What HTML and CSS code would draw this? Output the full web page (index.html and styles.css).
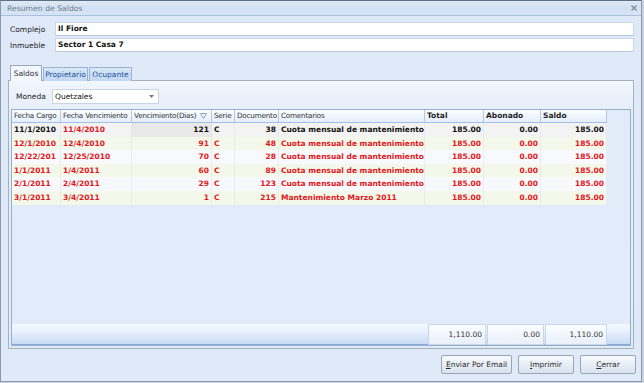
FILE: index.html
```html
<!DOCTYPE html>
<html>
<head>
  <title>Resumen de Saldos</title>
  <link rel="stylesheet" href="styles.css">
</head>
<body>
<div class="window">
  <div class="titlebar">
    <span class="title">Resumen de Saldos</span>
    <svg class="close" width="6" height="6" viewBox="0 0 6 6"><path d="M0.5 0.5 L5.5 5.5 M5.5 0.5 L0.5 5.5" stroke="#7b8796" stroke-width="1.1"/></svg>
  </div>
  <div class="content">
    <div class="field">
      <span class="label">Complejo</span>
      <div class="input">Il Fiore</div>
    </div>
    <div class="field">
      <span class="label">Inmueble</span>
      <div class="input">Sector 1 Casa 7</div>
    </div>

    <div class="tabs">
      <span class="tab active">Saldos</span>
      <span class="tab">Propietario</span>
      <span class="tab">Ocupante</span>
    </div>
    <div class="page">
      <div class="moneda">
        <span class="label">Moneda</span>
        <div class="combo">
          <span>Quetzales</span>
          <svg width="5" height="3" viewBox="0 0 5 3"><path d="M0 0 H5 L2.5 3 Z" fill="#777"/></svg>
        </div>
      </div>

      <div class="grid">
        <div class="row head">
          <div class="cell">Fecha Cargo</div>
          <div class="cell">Fecha Vencimiento</div>
          <div class="cell filter">Vencimiento(Dias)
            <svg width="7" height="6" viewBox="0 0 7 6"><path d="M0.5 0.5 H6.5 L3.5 5.5 Z" fill="none" stroke="#8a9bb3" stroke-width="0.9"/></svg>
          </div>
          <div class="cell">Serie</div>
          <div class="cell">Documento</div>
          <div class="cell">Comentarios</div>
          <div class="cell b">Total</div>
          <div class="cell b">Abonado</div>
          <div class="cell b">Saldo</div>
        </div>
        <div class="rows">
          <div class="row data first">
            <div class="cell">11/1/2010</div>
            <div class="cell red">11/4/2010</div>
            <div class="cell num focus">121</div>
            <div class="cell">C</div>
            <div class="cell num">38</div>
            <div class="cell">Cuota mensual de mantenimiento</div>
            <div class="cell num">185.00</div>
            <div class="cell num">0.00</div>
            <div class="cell num">185.00</div>
          </div>
          <div class="row data red alt">
            <div class="cell">12/1/2010</div>
            <div class="cell">12/4/2010</div>
            <div class="cell num">91</div>
            <div class="cell">C</div>
            <div class="cell num">48</div>
            <div class="cell">Cuota mensual de mantenimiento</div>
            <div class="cell num">185.00</div>
            <div class="cell num">0.00</div>
            <div class="cell num">185.00</div>
          </div>
          <div class="row data red">
            <div class="cell">12/22/201</div>
            <div class="cell">12/25/2010</div>
            <div class="cell num">70</div>
            <div class="cell">C</div>
            <div class="cell num">28</div>
            <div class="cell">Cuota mensual de mantenimiento</div>
            <div class="cell num">185.00</div>
            <div class="cell num">0.00</div>
            <div class="cell num">185.00</div>
          </div>
          <div class="row data red alt">
            <div class="cell">1/1/2011</div>
            <div class="cell">1/4/2011</div>
            <div class="cell num">60</div>
            <div class="cell">C</div>
            <div class="cell num">89</div>
            <div class="cell">Cuota mensual de mantenimiento</div>
            <div class="cell num">185.00</div>
            <div class="cell num">0.00</div>
            <div class="cell num">185.00</div>
          </div>
          <div class="row data red">
            <div class="cell">2/1/2011</div>
            <div class="cell">2/4/2011</div>
            <div class="cell num">29</div>
            <div class="cell">C</div>
            <div class="cell num">123</div>
            <div class="cell">Cuota mensual de mantenimiento</div>
            <div class="cell num">185.00</div>
            <div class="cell num">0.00</div>
            <div class="cell num">185.00</div>
          </div>
          <div class="row data red alt">
            <div class="cell">3/1/2011</div>
            <div class="cell">3/4/2011</div>
            <div class="cell num">1</div>
            <div class="cell">C</div>
            <div class="cell num">215</div>
            <div class="cell">Mantenimiento Marzo 2011</div>
            <div class="cell num">185.00</div>
            <div class="cell num">0.00</div>
            <div class="cell num">185.00</div>
          </div>
        </div>
        <div class="footer">
          <div class="sum total">1,110.00</div>
          <div class="sum abonado">0.00</div>
          <div class="sum saldo">1,110.00</div>
        </div>
      </div>
    </div>

    <div class="buttons">
      <button class="btn email"><u>E</u>nviar Por Email</button>
      <button class="btn print"><u>I</u>mprimir</button>
      <button class="btn close-btn"><u>C</u>errar</button>
    </div>
  </div>
</div>
</body>
</html>
```

FILE: styles.css
```css
* {
  box-sizing: border-box;
}
body {
  margin: 0;
  padding: 0;
  background: #c9d2dd;
  font-family: "DejaVu Sans", sans-serif;
  font-size: 7.5px;
  color: #222;
}
.window {
  width: 642px;
  height: 382px;
  background: #dfe9f8;
  border: 1px solid #8a99ad;
  border-top: 1px solid #5f6f84;
  display: flex;
  flex-direction: column;
}
.titlebar {
  height: 15px;
  background: linear-gradient(#dfe9f6, #d2e1f4 45%, #d6e4f5);
  border-bottom: 1px solid #a9c2e0;
  display: flex;
  align-items: center;
  justify-content: space-between;
  padding: 0 4px 0 6px;
}
.title {
  color: #6e7d90;
  font-size: 7.7px;
}
.close {
  margin-top: -1px;
}
.content {
  flex: 1;
  padding: 6px 7px 0 7px;
  display: flex;
  flex-direction: column;
}
.field {
  display: flex;
  align-items: center;
  height: 14px;
  margin-bottom: 2px;
  padding-left: 2px;
}
.field .label {
  width: 45px;
}
.input {
  flex: 1;
  height: 14px;
  background: #fff;
  border: 1px solid #c8d7ea;
  border-bottom-color: #b9c9dd;
  font-weight: bold;
  color: #111;
  padding-left: 2px;
  line-height: 12px;
}

/* tabs */
.tabs {
  display: flex;
  align-items: flex-end;
  height: 16px;
  margin-top: 11px;
  padding-left: 2px;
  position: relative;
  z-index: 1;
  margin-bottom: -1px;
}
.tab {
  height: 14px;
  line-height: 13px;
  text-align: center;
  color: #22509a;
  background: linear-gradient(#d9e7f8, #c3d8f2);
  border: 1px solid #9bb3d2;
  border-bottom: none;
  margin-right: 1px;
}
.tab:nth-child(1) { width: 32px; }
.tab:nth-child(2) { width: 45px; }
.tab:nth-child(3) { width: 43px; }
.tab.active {
  height: 16px;
  line-height: 15px;
  color: #333;
  background: #f2f6fd;
  border-color: #9ba9ba;
}
.page {
  height: 269px;
  border: 1px solid #a4b1c1;
  background: linear-gradient(#f2f6fd, #e6eefa 30px, #e0eaf9);
  padding: 0 2px 2px 2px;
  display: flex;
  flex-direction: column;
}
.moneda {
  display: flex;
  align-items: center;
  height: 15px;
  margin-top: 8px;
  padding-left: 5px;
}
.moneda .label {
  width: 36px;
}
.combo {
  width: 107px;
  height: 15px;
  background: #fff;
  border: 1px solid #c6d4e6;
  display: flex;
  align-items: center;
  justify-content: space-between;
  padding: 0 4px 0 2px;
  color: #111;
}

/* grid */
.grid {
  flex: 1;
  margin-top: 5px;
  border: 1px solid #97aecb;
  background: #e2ebf9;
  display: flex;
  flex-direction: column;
}
.row {
  display: grid;
  grid-template-columns: 49px 71px 80px 23px 44px 146px 59px 57px 66px;
  width: 595px;
}
.row.head {
  height: 13px;
  background: linear-gradient(#fbfdff, #e4eefb);
  border-bottom: 1px solid #a3bfe2;
  color: #333;
}
.head .cell {
  border-right: 1px solid #b3c8e4;
  padding-left: 2px;
  line-height: 12px;
  font-size: 7.2px;
  letter-spacing: -0.2px;
  white-space: nowrap;
  overflow: hidden;
}
.head .cell.b {
  font-weight: bold;
  font-size: 7.5px;
  letter-spacing: 0;
  color: #1d1d1d;
}
.head .filter {
  display: flex;
  align-items: center;
  justify-content: space-between;
  padding-right: 4px;
}
.rows {
  flex: 1;
}
.row.data {
  height: 13.6px;
  font-weight: bold;
  color: #111;
  background: #f7f9fd;
}
.row.data.alt {
  background: #f4f8ea;
}
.row.data.first {
  background: #f3f3f3;
}
.row.red {
  color: #e3161c;
}
.data .cell {
  padding: 0 2px;
  line-height: 13.6px;
  white-space: nowrap;
  overflow: hidden;
  border-right: 1px solid rgba(210, 216, 226, 0.35);
}
.data .cell.red {
  color: #e3161c;
}
.data .cell.num {
  text-align: right;
}
.data .cell.focus {
  background: #e9e9e9;
}
.footer {
  height: 21px;
  background: linear-gradient(#f3f8fe, #eaf2fd 35%, #c8dbf5);
  border-bottom: 1px solid #86acde;
  display: grid;
  grid-template-columns: 415px 58px 57px 62px;
  gap: 0 1px;
}
.sum {
  background: linear-gradient(#fbfdff, #e9f0fa);
  border: 1px solid #c8d6ea;
  text-align: right;
  padding-right: 3px;
  line-height: 19px;
  color: #333;
}
.sum.total {
  grid-column: 2;
}

/* buttons */
.buttons {
  display: flex;
  justify-content: flex-end;
  gap: 6px;
  margin-top: 6px;
  margin-right: -2px;
}
.btn {
  height: 19px;
  padding: 0;
  font-family: "DejaVu Sans", sans-serif;
  font-size: 7.5px;
  color: #2b2b2b;
  background: linear-gradient(#f7f9fc, #e8eef6 50%, #d9e2ee);
  border: 1px solid #9aa6b6;
  border-radius: 2px;
  cursor: pointer;
}
.btn.email { width: 71px; }
.btn.print { width: 56px; }
.btn.close-btn { width: 56px; }
```
